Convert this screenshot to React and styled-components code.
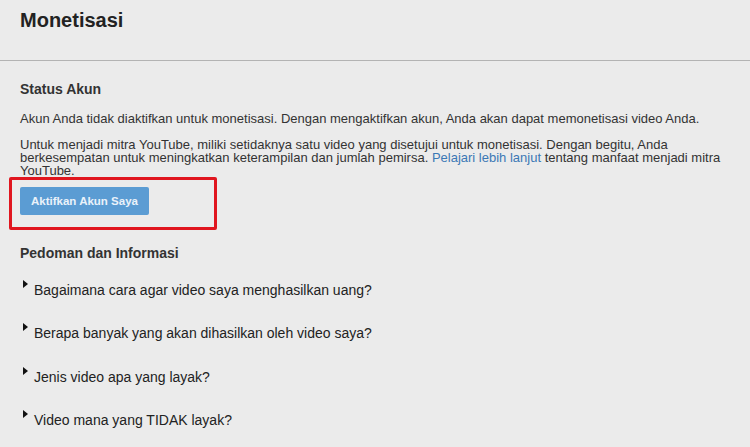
import React from 'react';
import styled, { createGlobalStyle } from 'styled-components';

const GlobalStyle = createGlobalStyle`
  html, body {
    margin: 0;
    padding: 0;
    background: #ebebeb;
  }
  body {
    font-family: "Liberation Sans", Arial, sans-serif;
    color: #333;
  }
`;

const Page = styled.div`
  width: 750px;
  height: 447px;
  overflow: hidden;
  background: #ebebeb;
`;

const Header = styled.div`
  height: 61px;
  padding: 8px 20px 0;
  box-sizing: border-box;
  border-bottom: 1px solid #b3b3b3;
`;

const Title = styled.h1`
  margin: 0;
  font-size: 20px;
  line-height: 24px;
  font-weight: bold;
  color: #222;
`;

const Content = styled.div`
  padding: 20px 20px 0;
`;

const SectionTitle = styled.h2`
  margin: ${p => p.$top || 0}px 0 0;
  font-size: 14px;
  line-height: 16px;
  font-weight: bold;
  color: #333;
`;

const Paragraph = styled.p`
  margin: ${p => p.$top || 0}px 0 0;
  font-size: 13px;
  line-height: ${p => p.$lh || 15}px;
  color: #333;
  max-width: 720px;
`;

const Link = styled.a`
  display: inline-block;
  line-height: 13px;
  color: #3b78b5;
  text-decoration: none;
`;

// red annotation frame round the button
const Highlight = styled.div`
  display: inline-block;
  margin: 0 0 0 -11px;
  padding: 7px 65px 12px 8px;
  border: 3px solid #e0161f;
  border-radius: 2px;
`;

const Button = styled.button`
  display: block;
  height: 28px;
  padding: 0 11px;
  border: none;
  border-radius: 2px;
  background: #5b9cd3;
  color: #eaf2fa;
  font-family: "Liberation Sans", Arial, sans-serif;
  font-size: 11.5px;
  font-weight: bold;
  cursor: pointer;
`;

const FaqList = styled.ul`
  list-style: none;
  margin: 18px 0 0;
  padding: 0;
`;

const FaqItem = styled.li`
  display: flex;
  align-items: flex-start;
  height: 43.3px;
  font-size: 14px;
  line-height: 16px;
  color: #222;
`;

const Arrow = styled.span`
  width: 0;
  height: 0;
  margin: 1px 6px 0 3px;
  border-top: 4px solid transparent;
  border-bottom: 4px solid transparent;
  border-left: 5px solid #111;
`;

const Question = styled.span`
  margin-top: 3px;
`;

const faqs = [
  'Bagaimana cara agar video saya menghasilkan uang?',
  'Berapa banyak yang akan dihasilkan oleh video saya?',
  'Jenis video apa yang layak?',
  'Video mana yang TIDAK layak?',
];

export default function App() {
  return (
    <Page>
      <GlobalStyle />
      <Header>
        <Title>Monetisasi</Title>
      </Header>
      <Content>
        <SectionTitle>Status Akun</SectionTitle>
        <Paragraph $top={14}>
          Akun Anda tidak diaktifkan untuk monetisasi. Dengan mengaktifkan akun, Anda akan dapat memonetisasi video Anda.
        </Paragraph>
        <Paragraph $top={12} $lh={13}>
          Untuk menjadi mitra YouTube, miliki setidaknya satu video yang disetujui untuk monetisasi. Dengan begitu, Anda
          berkesempatan untuk meningkatkan keterampilan dan jumlah pemirsa. <Link href="#">Pelajari lebih lanjut</Link> tentang manfaat menjadi mitra YouTube.
        </Paragraph>
        <Highlight>
          <Button>Aktifkan Akun Saya</Button>
        </Highlight>
        <SectionTitle $top={15}>Pedoman dan Informasi</SectionTitle>
        <FaqList>
          {faqs.map((q) => (
            <FaqItem key={q}>
              <Arrow />
              <Question>{q}</Question>
            </FaqItem>
          ))}
        </FaqList>
      </Content>
    </Page>
  );
}
